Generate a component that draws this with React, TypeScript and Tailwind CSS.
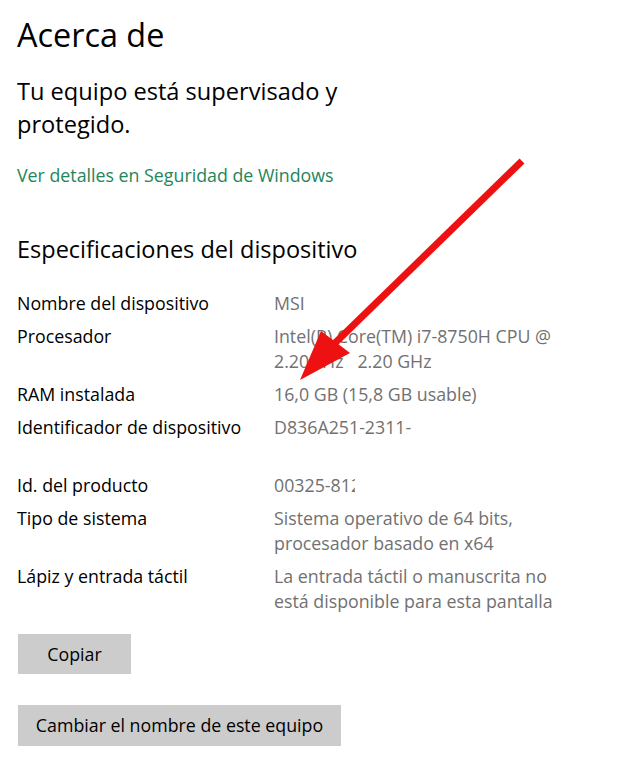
import React from "react";

const specs: { label: string; value: string[]; clip?: boolean }[] = [
  { label: "Nombre del dispositivo", value: ["MSI"] },
  { label: "Procesador", value: ["Intel(R) Core(TM) i7-8750H CPU @", "2.20GHz   2.20 GHz"] },
  { label: "RAM instalada", value: ["16,0 GB (15,8 GB usable)"] },
  { label: "Identificador de dispositivo", value: ["D836A251-2311-", "\u00a0"] },
  { label: "Id. del producto", value: ["00325-812"], clip: true },
  { label: "Tipo de sistema", value: ["Sistema operativo de 64 bits,", "procesador basado en x64"] },
  { label: "Lápiz y entrada táctil", value: ["La entrada táctil o manuscrita no", "está disponible para esta pantalla"] },
];

export default function App() {
  return (
    <div
      className="relative w-[633px] h-[782px] bg-white overflow-hidden text-black"
      style={{ fontFamily: '"Open Sans", "Noto Sans", sans-serif' }}
    >
      <div className="flex flex-col pl-[17px] pt-[12px]">
        <h1 className="text-[32.4px] leading-[44px] font-normal">Acerca de</h1>

        <p className="mt-[19px] text-[23.6px] leading-[33px] w-[340px]">
          Tu equipo está supervisado y protegido.
        </p>

        <a className="mt-[22px] text-[17.8px] leading-[24px] text-[#23855a]">
          Ver detalles en Seguridad de Windows
        </a>

        <h2 className="mt-[46px] text-[23.5px] leading-[32px] font-normal">
          Especificaciones del dispositivo
        </h2>

        <div className="mt-[26px] flex flex-col gap-[8px]">
          {specs.map((s) => (
            <div key={s.label} className="flex text-[17.8px] leading-[25px]">
              <div className="w-[257px] shrink-0">{s.label}</div>
              <div className={s.clip ? "flex flex-col text-[#717171] w-[81px] overflow-hidden" : "flex flex-col text-[#717171]"}>
                {s.value.map((v, i) => (
                  <span key={i} className="whitespace-pre">
                    {v}
                  </span>
                ))}
              </div>
            </div>
          ))}
        </div>

        <div className="mt-[20px] pl-[1px] flex flex-col items-start gap-[31px]">
          <button className="w-[113px] h-[40px] bg-[#cccccc] text-[17.8px]">Copiar</button>
          <button className="w-[323px] h-[41px] bg-[#cccccc] text-[17.8px]">
            Cambiar el nombre de este equipo
          </button>
        </div>
      </div>

      {/* red annotation arrow */}
      <svg className="absolute left-0 top-0 pointer-events-none" width="633" height="782">
        <line x1="522" y1="161" x2="334" y2="344" stroke="#ee1111" strokeWidth="7" strokeLinecap="butt" />
        <polygon points="300,380 321,331 350,353" fill="#ee1111" />
      </svg>
    </div>
  );
}
